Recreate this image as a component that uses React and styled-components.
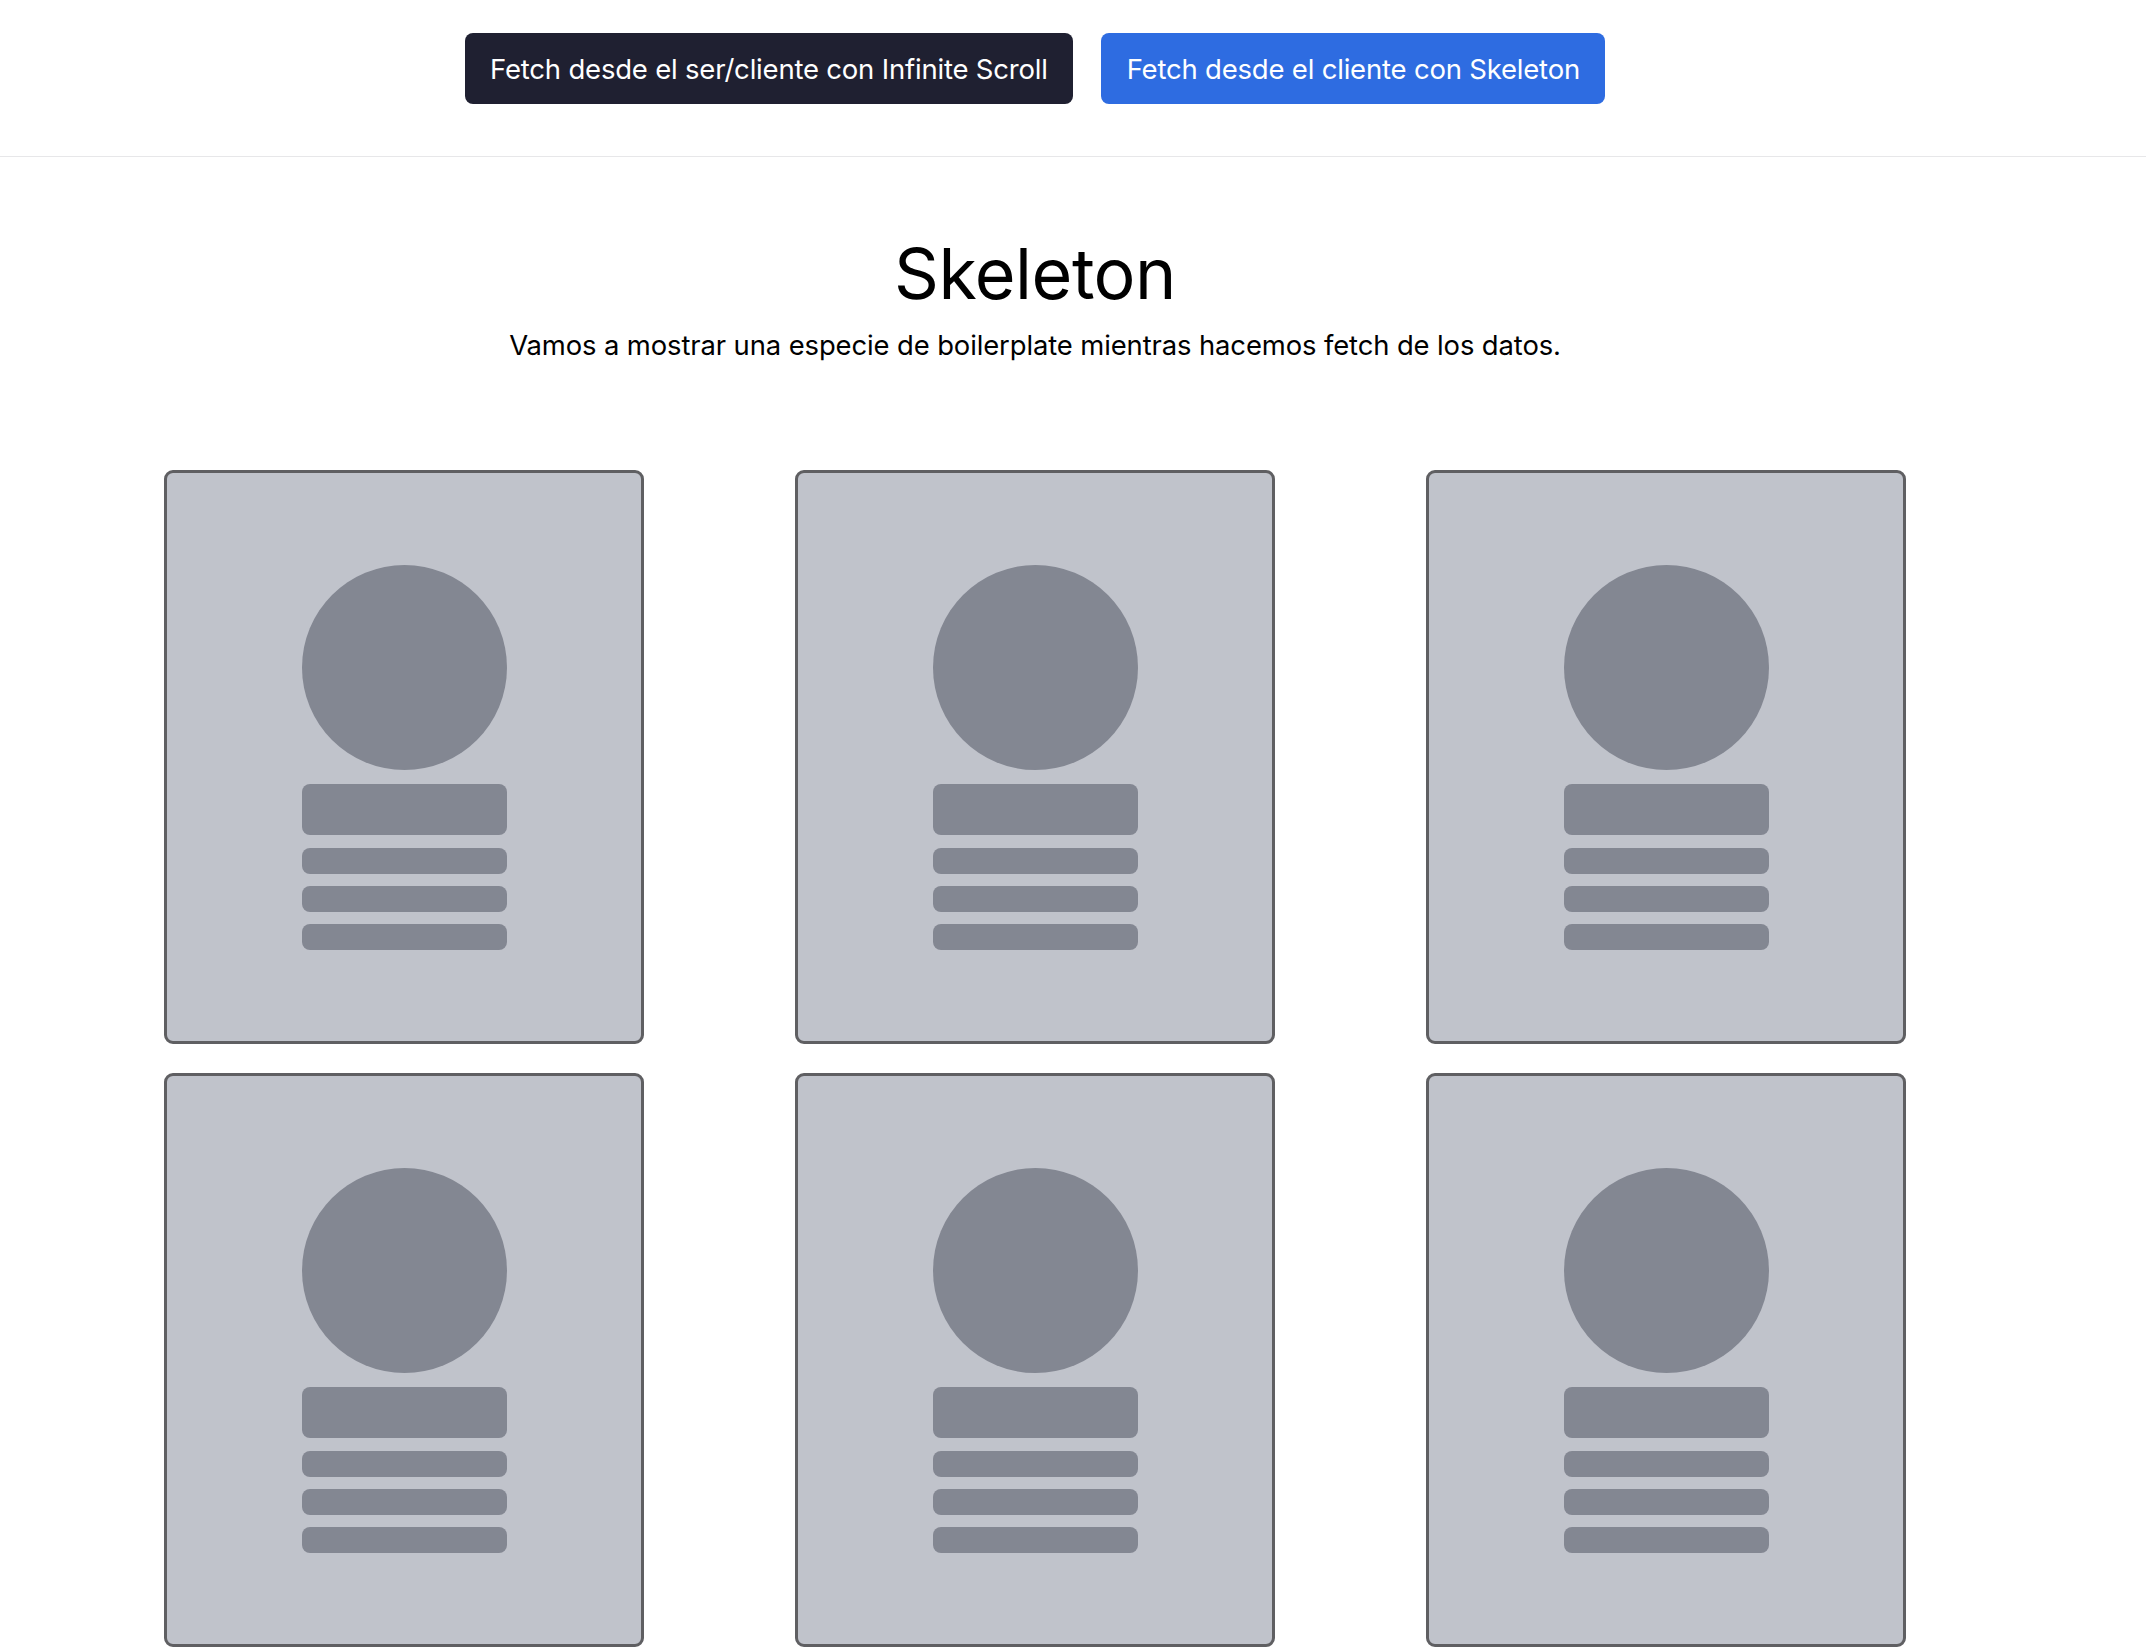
import React from 'react';
import styled, { createGlobalStyle } from 'styled-components';

const tekster = {
  infinite: 'Fetch desde el ser/cliente con Infinite Scroll',
  skeleton: 'Fetch desde el cliente con Skeleton',
  titulo: 'Skeleton',
  descripcion: 'Vamos a mostrar una especie de boilerplate mientras hacemos fetch de los datos.',
};

const GlobalStyle = createGlobalStyle`
  body {
    margin: 0;
    background: #ffffff;
    font-family: Inter, "Noto Sans", "Liberation Sans", sans-serif;
    color: #000000;
  }
`;

const Page = styled.div`
  width: 100%;
`;

const Header = styled.header`
  display: flex;
  justify-content: center;
  gap: 28px;
  padding: 33px 76px 52px 0;
  border-bottom: 1px solid #e7e7e9;
`;

const NavButton = styled.button`
  height: 71px;
  padding: 0 25.5px;
  border: none;
  border-radius: 8px;
  background: ${(p) => (p.$active ? '#2e6ce1' : '#1f2031')};
  color: #ffffff;
  font-family: Inter, "Noto Sans", sans-serif;
  font-size: 27.5px;
  letter-spacing: -0.2px;
  cursor: pointer;
`;

const Main = styled.main`
  width: 2070px;
`;

const Intro = styled.section`
  display: flex;
  flex-direction: column;
  align-items: center;
  padding-top: 75px;
`;

const Title = styled.h1`
  margin: 0;
  font-size: 70px;
  font-weight: 400;
  line-height: 1.2;
  letter-spacing: -0.5px;
`;

const Description = styled.p`
  margin: 12px 0 0;
  font-size: 27.4px;
  line-height: 1.3;
  letter-spacing: -0.1px;
`;

const Grid = styled.div`
  display: grid;
  grid-template-columns: repeat(3, 631px);
  justify-content: center;
  justify-items: center;
  row-gap: 29px;
  margin-top: 106px;
`;

const Card = styled.div`
  box-sizing: border-box;
  width: 480px;
  height: 574px;
  padding-top: 92px;
  display: flex;
  flex-direction: column;
  align-items: center;
  background: #c0c3cb;
  border: 3px solid #5f5f62;
  border-radius: 9px;
`;

const Avatar = styled.div`
  width: 205px;
  height: 205px;
  border-radius: 50%;
  background: #838792;
`;

const Lines = styled.div`
  display: flex;
  flex-direction: column;
  gap: 12px;
  margin-top: 14px;
`;

const Line = styled.div`
  width: 205px;
  height: ${(p) => (p.$big ? '51px' : '26px')};
  margin-bottom: ${(p) => (p.$big ? '1px' : '0')};
  border-radius: 8px;
  background: #838792;
`;

const SkeletonCard = () => (
  <Card>
    <Avatar />
    <Lines>
      <Line $big />
      <Line />
      <Line />
      <Line />
    </Lines>
  </Card>
);

const App = () => {
  return (
    <Page>
      <GlobalStyle />
      <Header>
        <NavButton>{tekster.infinite}</NavButton>
        <NavButton $active>{tekster.skeleton}</NavButton>
      </Header>
      <Main>
        <Intro>
          <Title>{tekster.titulo}</Title>
          <Description>{tekster.descripcion}</Description>
        </Intro>
        <Grid>
          {[0, 1, 2, 3, 4, 5].map((i) => (
            <SkeletonCard key={i} />
          ))}
        </Grid>
      </Main>
    </Page>
  );
};

export default App;
